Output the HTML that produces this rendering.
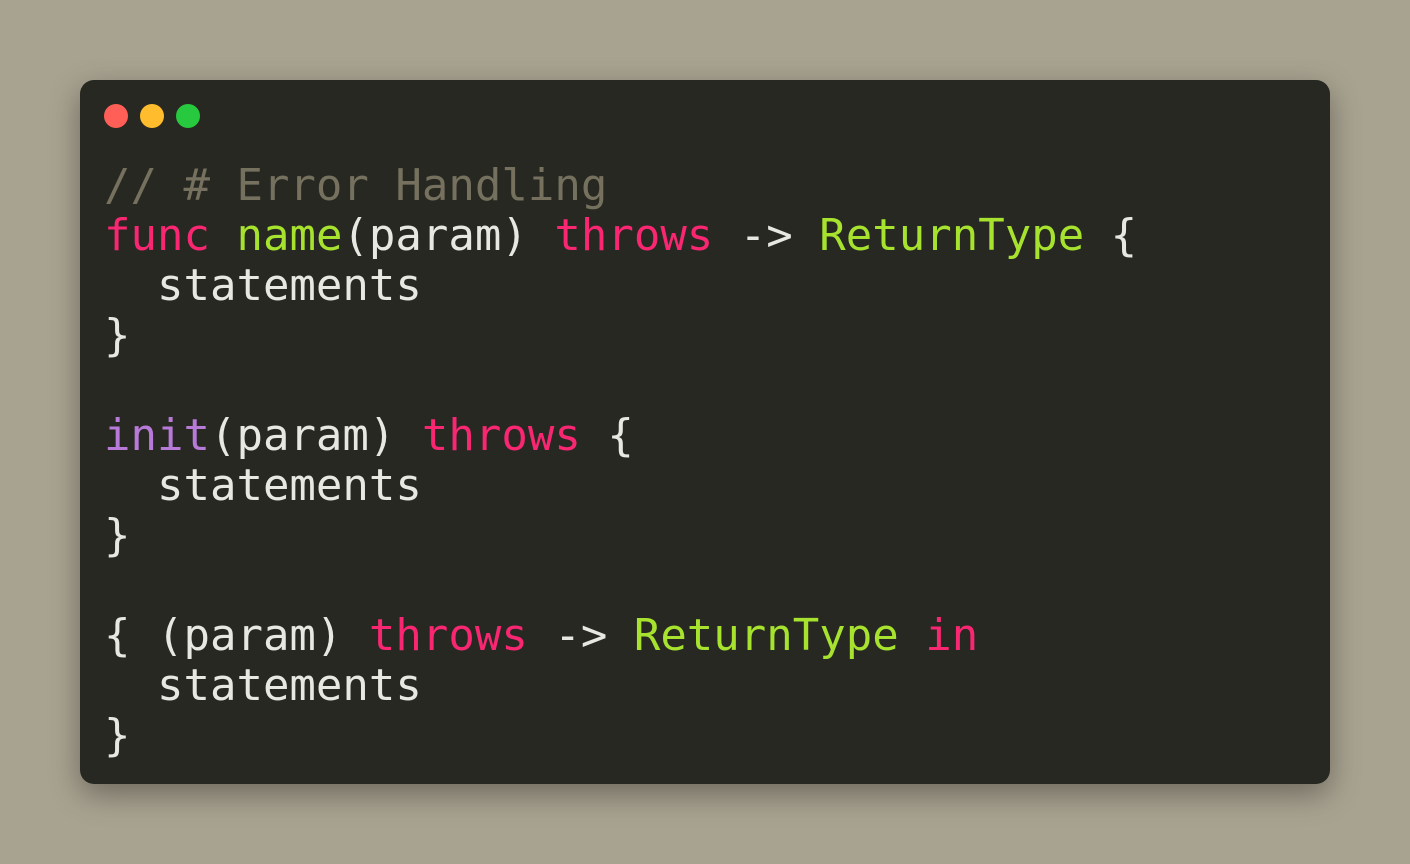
<!DOCTYPE html>
<html><head><style>
html,body{margin:0;padding:0;}
body{width:1410px;height:864px;background:#a8a290;position:relative;overflow:hidden;}
.win{position:absolute;left:80px;top:80px;width:1250px;height:704px;background:#272822;border-radius:14px;box-shadow:0 10px 30px rgba(0,0,0,0.35);}
.dot{position:absolute;top:24px;width:24px;height:24px;border-radius:50%;}
pre{position:absolute;left:24px;top:81px;margin:0;font-family:"DejaVu Sans Mono","Liberation Mono",monospace;font-size:44px;line-height:50px;color:#e8e8e2;}
.c{color:#75715e}.k{color:#f92672}.g{color:#a6e22e}.p{color:#b87ad8}
</style></head><body>
<div class="win">
<div class="dot" style="left:24px;background:#ff5f56"></div>
<div class="dot" style="left:60px;background:#ffbd2e"></div>
<div class="dot" style="left:96px;background:#27c93f"></div>
<pre><span class="c">// # Error Handling</span>
<span class="k">func</span> <span class="g">name</span>(param) <span class="k">throws</span> -&gt; <span class="g">ReturnType</span> {
  statements
}

<span class="p">init</span>(param) <span class="k">throws</span> {
  statements
}

{ (param) <span class="k">throws</span> -&gt; <span class="g">ReturnType</span> <span class="k">in</span>
  statements
}</pre>
</div>
</body></html>
